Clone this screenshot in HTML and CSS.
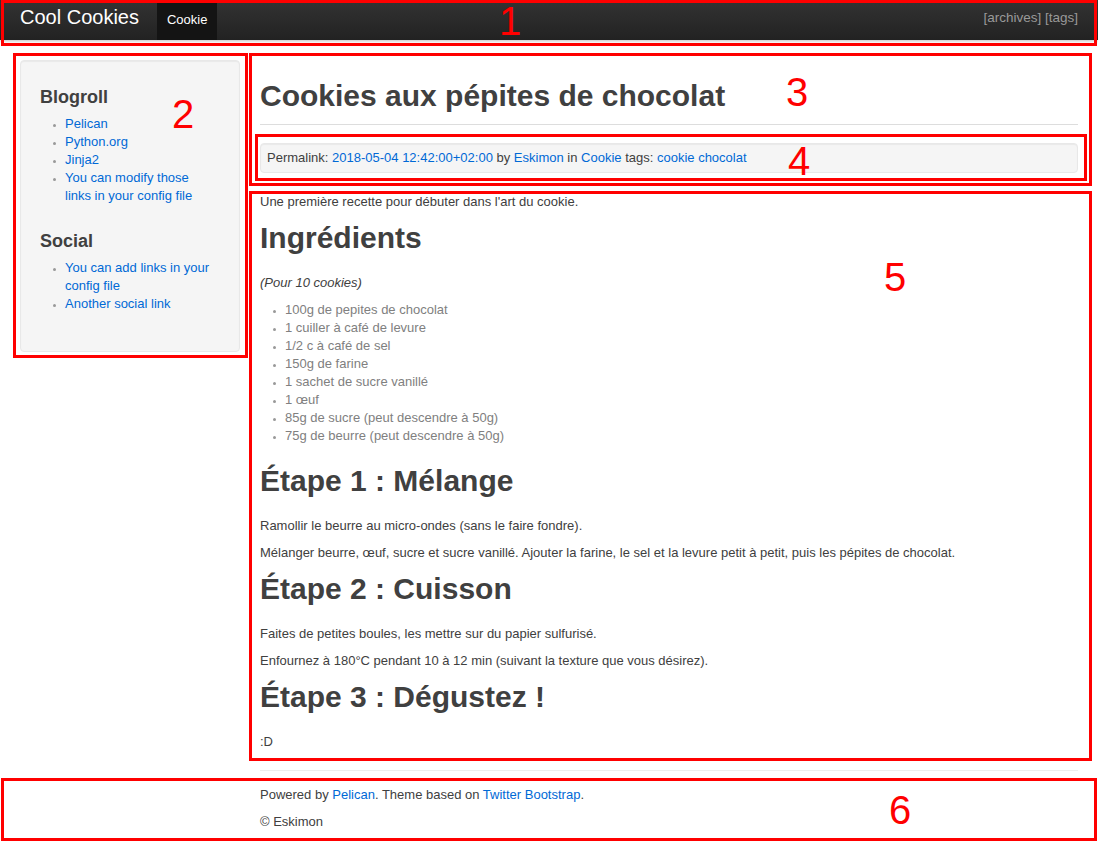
FILE: index.html
```html
<!DOCTYPE html>
<html lang="fr">
<head>
<meta charset="utf-8">
<title>Cookies aux pépites de chocolat</title>
<link rel="stylesheet" href="styles.css">
</head>
<body>
<header class="topbar">
  <a class="brand" href="#">Cool Cookies</a>
  <nav class="nav">
    <a class="nav-item active" href="#">Cookie</a>
  </nav>
  <p class="pull-right"><a href="#">[archives]</a> <a href="#">[tags]</a></p>
</header>

<div class="page">
  <aside class="sidebar">
    <div class="well side-well">
      <h3 class="side-title first">Blogroll</h3>
      <ul class="side-list">
        <li><a href="#">Pelican</a></li>
        <li><a href="#">Python.org</a></li>
        <li><a href="#">Jinja2</a></li>
        <li><a href="#">You can modify those links in your config file</a></li>
      </ul>
      <h3 class="side-title">Social</h3>
      <ul class="side-list">
        <li><a href="#">You can add links in your config file</a></li>
        <li><a href="#">Another social link</a></li>
      </ul>
    </div>
  </aside>

  <main class="content">
    <div class="page-header">
      <h1>Cookies aux pépites de chocolat</h1>
    </div>
    <div class="well meta">
      Permalink: <a href="#">2018-05-04 12:42:00+02:00</a> by <a href="#">Eskimon</a> in <a href="#">Cookie</a> tags: <a href="#">cookie</a> <a href="#">chocolat</a>
    </div>
    <article class="article">
      <p>Une première recette pour débuter dans l'art du cookie.</p>
      <h1>Ingrédients</h1>
      <p><em>(Pour 10 cookies)</em></p>
      <ul>
        <li>100g de pepites de chocolat</li>
        <li>1 cuiller à café de levure</li>
        <li>1/2 c à café de sel</li>
        <li>150g de farine</li>
        <li>1 sachet de sucre vanillé</li>
        <li>1 œuf</li>
        <li>85g de sucre (peut descendre à 50g)</li>
        <li>75g de beurre (peut descendre à 50g)</li>
      </ul>
      <h1>Étape 1 : Mélange</h1>
      <p>Ramollir le beurre au micro-ondes (sans le faire fondre).</p>
      <p>Mélanger beurre, œuf, sucre et sucre vanillé. Ajouter la farine, le sel et la levure petit à petit, puis les pépites de chocolat.</p>
      <h1>Étape 2 : Cuisson</h1>
      <p>Faites de petites boules, les mettre sur du papier sulfurisé.</p>
      <p>Enfournez à 180°C pendant 10 à 12 min (suivant la texture que vous désirez).</p>
      <h1>Étape 3 : Dégustez !</h1>
      <p>:D</p>
    </article>
    <footer class="footer">
      <p>Powered by <a href="#">Pelican</a>. Theme based on <a href="#">Twitter Bootstrap</a>.</p>
      <p>© Eskimon</p>
    </footer>
  </main>
</div>

<div class="annotations">
  <div class="box box1"></div>
  <div class="box box2"></div>
  <div class="box box3"></div>
  <div class="box box4"></div>
  <div class="box box5"></div>
  <div class="box box6"></div>
  <span class="num num1">1</span>
  <span class="num num2">2</span>
  <span class="num num3">3</span>
  <span class="num num4">4</span>
  <span class="num num5">5</span>
  <span class="num num6">6</span>
</div>
</body>
</html>
```
FILE: styles.css
```css
* { box-sizing: border-box; }
html, body { margin: 0; padding: 0; }
body {
  background: #fff;
  color: #404040;
  font-family: "Liberation Sans", Arial, sans-serif;
  font-size: 13px;
  line-height: 18px;
  position: relative;
  min-height: 841px;
}
a { color: #0069d6; text-decoration: none; }

/* top bar */
.topbar {
  height: 40px;
  display: flex;
  align-items: stretch;
  padding: 0 20px 0 0;
  background: linear-gradient(#333333, #222222);
  box-shadow: 0 1px 3px rgba(0,0,0,0.25);
}
.brand {
  color: #ffffff;
  font-size: 20px;
  line-height: 20px;
  padding: 7px 18px 13px 20px;
}
.nav { display: flex; }
.nav-item {
  color: #ffffff;
  padding: 10px 10px 11px;
  line-height: 19px;
}
.nav-item.active { background: #141414; }
.pull-right {
  margin: 0 0 0 auto;
  font-size: 13.5px;
  line-height: 36px;
  color: #999;
}
.pull-right a { color: #999; }

/* layout */
.page {
  display: flex;
  padding: 20px 20px 0;
  gap: 20px;
}
.sidebar { width: 220px; flex: none; }
.content { flex: 1; min-width: 0; }

.well {
  background: #f5f5f5;
  border: 1px solid #e8e8e8;
  border-radius: 4px;
  box-shadow: inset 0 1px 1px rgba(0,0,0,0.05);
}
.side-well { padding: 19px 19px 20px; }
.side-title {
  margin: 23px 0 0;
  font-size: 18px;
  line-height: 27px;
  font-weight: bold;
  color: #404040;
}
.side-title.first { margin-top: 4px; }
.side-list {
  margin: 4px 8px 18px 25px;
  padding: 0;
}
.side-list li, .article li { color: #808080; line-height: 18px; }
.side-list li::marker, .article li::marker { color: #999; font-size: 9px; }

/* article */
.page-header {
  border-bottom: 1px solid #dddddd;
  margin-bottom: 18px;
}
.page-header h1 { margin: 18px 0 10px; }
h1 {
  font-size: 30px;
  line-height: 36px;
  font-weight: bold;
  color: #404040;
  margin: 0 0 18px;
}
p { margin: 0 0 9px; }
.meta {
  padding: 5px 6px;
  margin-bottom: 20px;
  line-height: 18px;
}
.article ul {
  margin: 0 0 18px 25px;
  padding: 0;
}

.footer {
  margin-top: 19px;
  padding-top: 15px;
  border-top: 1px solid #eeeeee;
}

/* annotation overlay */
.annotations {
  position: absolute;
  left: 0;
  top: 0;
  width: 1098px;
  height: 841px;
  pointer-events: none;
}
.box {
  position: absolute;
  border: 3px solid #ff0000;
}
.box1 { left: 1px; top: 0; width: 1096px; height: 46px; }
.box2 { left: 13px; top: 53px; width: 235px; height: 305px; }
.box3 { left: 249px; top: 53px; width: 843px; height: 133px; }
.box4 { left: 255px; top: 134px; width: 832px; height: 47px; }
.box5 { left: 249px; top: 191px; width: 843px; height: 570px; }
.box6 { left: 1px; top: 778px; width: 1096px; height: 63px; }
.num {
  position: absolute;
  color: #ff0000;
  font-family: "Liberation Sans", Arial, sans-serif;
  font-size: 40px;
  line-height: 40px;
}
.num1 { left: 499px; top: 1px; }
.num2 { left: 172px; top: 94px; }
.num3 { left: 786px; top: 72px; }
.num4 { left: 788px; top: 141px; }
.num5 { left: 884px; top: 257px; }
.num6 { left: 889px; top: 790px; }
```
